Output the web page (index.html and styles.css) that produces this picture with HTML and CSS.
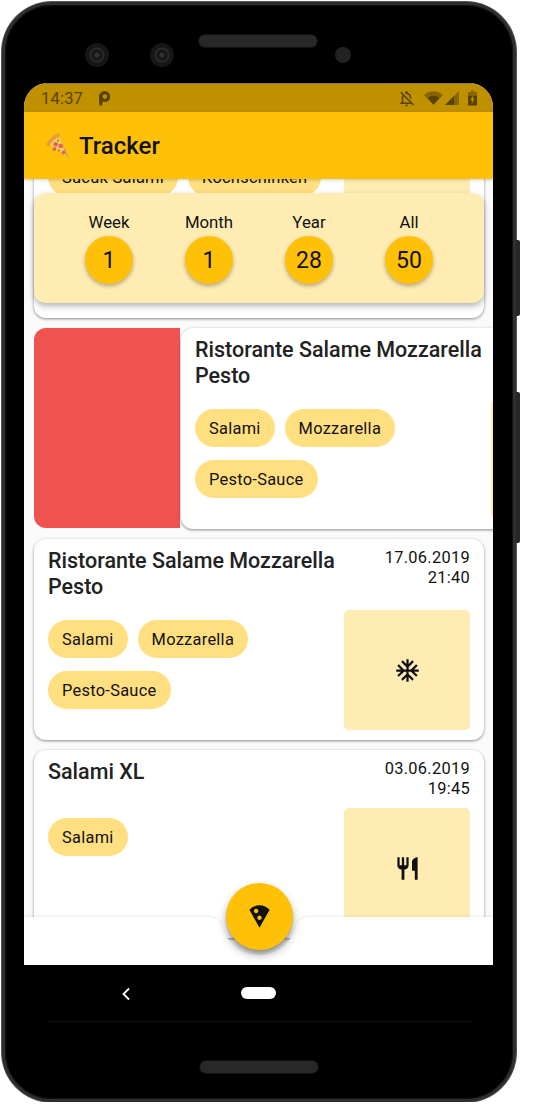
FILE: index.html
```html
<!DOCTYPE html>
<html lang="de">

<head>
    <meta charset="UTF-8">
    <meta name="viewport" content="width=device-width, initial-scale=1.0">
    <title>Tracker</title>
    <link rel="stylesheet" href="styles.css">
</head>

<body>
    <div class="device">
        <div class="phone">
            <div class="bezel-top">
                <span class="lens"></span>
                <span class="lens lens-second"></span>
                <span class="speaker"></span>
                <span class="front-cam"></span>
            </div>

            <div class="screen">
                <div class="status-bar">
                    <span class="clock">14:37</span>
                    <svg class="status-p" viewBox="0 0 12 15">
                        <circle cx="6.8" cy="5.6" r="3.900" fill="none" stroke="currentColor" stroke-width="3.200"/>
                        <rect x="1.200" y="3" width="3.200" height="11.500" rx="1.300" fill="currentColor"/>
                    </svg>
                    <span class="status-space"></span>
                    <svg class="status-icon" viewBox="0 0 24 24"><path fill="currentColor" d="M12 22c1.100 0 2-.9 2-2h-4c0 1.100.9 2 2 2zm0-15.500c2.490 0 4 2.020 4 4.500v.1l2 2V11c0-3.070-1.630-5.640-4.500-6.320V4c0-.83-.67-1.500-1.500-1.500s-1.500.67-1.500 1.500v.68c-.24.06-.47.15-.69.23l1.640 1.640c.18-.02.36-.05.55-.05zM5.410 3.350L4 4.760l2.810 2.810C6.290 8.570 6 9.740 6 11v5l-2 2v1h14.240l1.740 1.740 1.410-1.410L5.410 3.350zM16 17H8v-6c0-.68.12-1.320.34-1.900L16 16.760V17z"/></svg>
                    <svg class="status-wifi" viewBox="0 0 20 14">
                        <path fill="currentColor" opacity="0.55" d="M0 4.200C2.600 1.700 6.100 0 10 0s7.400 1.700 10 4.200L10 14z"/>
                        <path fill="currentColor" d="M4 6.900C5.600 5.500 7.700 4.600 10 4.600s4.400.9 6 2.300L10 14z"/>
                    </svg>
                    <svg class="status-signal" viewBox="0 0 14 14">
                        <path fill="currentColor" opacity="0.55" d="M14 0v14H8V6z"/>
                        <path fill="currentColor" d="M9 5v9H0z"/>
                    </svg>
                    <svg class="status-battery" viewBox="0 0 9 15">
                        <path fill="currentColor" opacity="0.55" d="M3 0h3v1.400h3V5H0V1.400h3z"/>
                        <path fill="currentColor" d="M0 5h9v10H0z"/>
                        <path fill="#bf9000" d="M5.200 4.600L2.400 9.800h1.900L3.600 13.400l3-5.400H4.800z"/>
                    </svg>
                </div>

                <header class="app-bar">
                    <svg class="pizza-logo" viewBox="0 0 26 28">
                        <path fill="#f9cf52" d="M3 11L14 3 24.500 26.500z"/>
                        <path fill="#d9a93a" d="M14 3L24.500 26.500 21 24z"/>
                        <path fill="#eb9c38" d="M1 12.500C3.500 7.500 8 3 14 1l1.500 3.500C10 6.500 6.500 10 4 14.500z"/>
                        <circle cx="10.700" cy="12.300" r="2.300" fill="#e5606f"/>
                        <circle cx="15.700" cy="14" r="2.200" fill="#e5606f"/>
                        <circle cx="9.500" cy="17" r="1.900" fill="#e5606f"/>
                        <circle cx="18.500" cy="20.500" r="2" fill="#e5606f"/>
                        <circle cx="13" cy="8.500" r="0.900" fill="#6d7a3a"/>
                        <circle cx="14" cy="18.500" r="0.900" fill="#6d7a3a"/>
                    </svg>
                    <h1 class="app-title">Tracker</h1>
                </header>

                <div class="list">
                    <div class="card card-cut">
                        <div class="card-body">
                            <div class="chips chips-tall">
                                <span class="chip">Sucuk Salami</span>
                                <span class="chip">Kochschinken</span>
                            </div>
                            <div class="tile tile-cut"></div>
                        </div>
                    </div>

                    <div class="stats">
                        <div class="stat">
                            <span class="stat-label">Week</span>
                            <span class="stat-value">1</span>
                        </div>
                        <div class="stat">
                            <span class="stat-label">Month</span>
                            <span class="stat-value">1</span>
                        </div>
                        <div class="stat">
                            <span class="stat-label">Year</span>
                            <span class="stat-value">28</span>
                        </div>
                        <div class="stat">
                            <span class="stat-label">All</span>
                            <span class="stat-value">50</span>
                        </div>
                    </div>

                    <div class="swipe-row">
                        <div class="swipe-delete"></div>
                        <div class="card">
                            <div class="card-head">
                                <h2 class="card-title card-title-swiped">Ristorante Salame Mozzarella Pesto</h2>
                            </div>
                            <div class="card-body">
                                <div class="chips">
                                    <span class="chip">Salami</span>
                                    <span class="chip">Mozzarella</span>
                                    <span class="chip">Pesto-Sauce</span>
                                </div>
                                <div class="tile"></div>
                            </div>
                        </div>
                    </div>

                    <div class="card">
                        <div class="card-head">
                            <h2 class="card-title">Ristorante Salame Mozzarella Pesto</h2>
                            <div class="card-date">17.06.2019<br>21:40</div>
                        </div>
                        <div class="card-body">
                            <div class="chips">
                                <span class="chip">Salami</span>
                                <span class="chip">Mozzarella</span>
                                <span class="chip">Pesto-Sauce</span>
                            </div>
                            <div class="tile">
                                <svg class="tile-icon" viewBox="0 0 24 24"><path d="M22 11h-4.170l3.240-3.240-1.410-1.420L15 11h-2V9l4.660-4.660-1.420-1.410L13 6.170V2h-2v4.170L7.760 2.930 6.340 4.340 11 9v2H9L4.340 6.340 2.930 7.760 6.170 11H2v2h4.170l-3.240 3.240 1.410 1.420L9 13h2v2l-4.660 4.660 1.420 1.410L11 17.830V22h2v-4.170l3.240 3.240 1.420-1.410L13 15v-2h2l4.660 4.660 1.410-1.420L17.830 13H22z"/></svg>
                            </div>
                        </div>
                    </div>

                    <div class="card">
                        <div class="card-head">
                            <h2 class="card-title">Salami XL</h2>
                            <div class="card-date">03.06.2019<br>19:45</div>
                        </div>
                        <div class="card-body">
                            <div class="chips">
                                <span class="chip">Salami</span>
                            </div>
                            <div class="tile">
                                <svg class="tile-icon" viewBox="0 0 24 24"><path d="M11 9H9V2H7v7H5V2H3v7c0 2.120 1.660 3.840 3.750 3.970V22h2.500v-9.030C11.340 12.840 13 11.120 13 9V2h-2v7zm5-3v8h2.500v8H21V2c-2.760 0-5 2.240-5 4z"/></svg>
                            </div>
                        </div>
                    </div>
                </div>

                <div class="bottom-bar">
                    <svg class="bar-shape" viewBox="0 0 469 48">
                        <path fill="#fff" d="M0 0H184C192 0 197 4 199 12A38 38 0 0 0 271 12C273 4 278 0 286 0H469V48H0Z"/>
                    </svg>
                    <button class="fab" aria-label="Pizza">
                        <svg class="fab-icon" viewBox="0 0 24 24"><path d="M12 2C8.430 2 5.230 3.540 3.010 6L12 22l8.990-16C18.780 3.550 15.570 2 12 2zM7 7c0-1.100.9-2 2-2s2 .9 2 2-.9 2-2 2-2-.9-2-2zm5 8c-1.100 0-2-.9-2-2s.9-2 2-2 2 .9 2 2-.9 2-2 2z"/></svg>
                    </button>
                </div>
            </div>

            <div class="nav-bar">
                <svg class="nav-back" viewBox="0 0 10 14"><path d="M8 1.500L2.500 7 8 12.500" fill="none" stroke="#fff" stroke-width="1.800"/></svg>
                <span class="nav-home"></span>
            </div>

            <div class="bezel-bottom">
                <span class="speaker"></span>
            </div>
        </div>

        <div class="side-keys">
            <span class="key key-power"></span>
            <span class="key key-volume"></span>
        </div>
    </div>
</body>

</html>
```

FILE: styles.css
```css
* {
    box-sizing: border-box;
}

body {
    margin: 0;
    background: #fff;
    font-family: Roboto, "Liberation Sans", sans-serif;
    color: #111;
}

.device {
    display: flex;
    padding: 2px 0 0 2px;
}

.phone {
    width: 514px;
    height: 1100px;
    padding: 0 19px;
    background: #000;
    border: 3px solid #2e2e2e;
    border-radius: 50px;
    box-shadow: inset 0 0 0 1px #111, 0 0 0 1px #555;
    display: flex;
    flex-direction: column;
}

.side-keys {
    width: 4px;
    padding-top: 238px;
    display: flex;
    flex-direction: column;
    gap: 76px;
}

.key {
    display: block;
    background: #262626;
    border-radius: 0 2px 2px 0;
}

.key-power {
    height: 76px;
}

.key-volume {
    height: 151px;
}

/* bezel */

.bezel-top {
    height: 78px;
    flex: none;
    padding-left: 61px;
    display: flex;
    align-items: flex-start;
}

.lens {
    width: 24px;
    height: 24px;
    margin-top: 38px;
    border-radius: 50%;
    background: radial-gradient(circle, #333 0 2px, #161616 3px 5px, #2a2a2a 6px 7px, #161616 8px);
}

.lens-second {
    margin-left: 41px;
}

.speaker {
    width: 118px;
    height: 12px;
    background: #282828;
    border-radius: 6px;
    box-shadow: 0 0 0 1px #111;
}

.bezel-top .speaker {
    margin: 30px 0 0 25px;
}

.front-cam {
    width: 16px;
    height: 16px;
    margin: 42px 0 0 18px;
    background: #222;
    border-radius: 50%;
}

.bezel-bottom {
    flex: 1;
    display: flex;
    justify-content: center;
    padding-top: 39px;
}

.nav-bar {
    height: 57px;
    flex: none;
    margin: 0 22px;
    border-bottom: 1px solid #0e0e0e;
    padding: 0 0 21px 75px;
    display: flex;
    align-items: flex-end;
}

.nav-back {
    width: 10px;
    height: 14px;
    margin-bottom: -1px;
}

.nav-home {
    width: 35px;
    height: 12px;
    margin-left: 110px;
    background: #fff;
    border-radius: 6px;
    margin-bottom: 1px;
}

/* screen */

.screen {
    position: relative;
    width: 469px;
    height: 882px;
    flex: none;
    background: #fafafa;
    border-radius: 24px 24px 0 0;
    overflow: hidden;
    display: flex;
    flex-direction: column;
}

.status-bar {
    height: 29px;
    flex: none;
    padding: 0 16px 0 17px;
    background: #bf9000;
    color: #584300;
    display: flex;
    align-items: center;
    border-top: 1px solid #8a7a45;
}

.clock {
    font-size: 16.500px;
    letter-spacing: 0.2px;
}

.status-p {
    width: 12px;
    height: 15px;
    margin-left: 15px;
}

.status-space {
    flex: 1;
}

.status-icon {
    width: 19px;
    height: 19px;
}

.status-wifi {
    width: 19px;
    height: 14px;
    margin-left: 8px;
}

.status-signal {
    width: 14px;
    height: 14px;
    margin-left: 2px;
}

.status-battery {
    width: 9px;
    height: 16px;
    margin-left: 9px;
}

.app-bar {
    height: 67px;
    flex: none;
    padding-left: 21px;
    background: #ffc107;
    display: flex;
    align-items: center;
    position: relative;
    z-index: 3;
    box-shadow: 0 1px 3px rgba(0, 0, 0, 0.2);
}

.pizza-logo {
    width: 26px;
    height: 28px;
}

.app-title {
    margin: 0 0 0 8px;
    font-size: 24px;
    font-weight: 500;
    color: #111;
}

.list {
    flex: 1;
    position: relative;
    padding: 0 8px 0 10px;
    overflow: hidden;
}

.stats {
    position: absolute;
    top: 14px;
    left: 10px;
    z-index: 2;
    width: 450px;
    height: 110px;
    padding-top: 17px;
    background: #ffecb3;
    border-radius: 12px;
    box-shadow: 0 3px 6px rgba(0, 0, 0, 0.3);
    display: flex;
    justify-content: center;
}

.stat {
    width: 100px;
    display: flex;
    flex-direction: column;
    align-items: center;
}

.stat-label {
    font-size: 16.800px;
    line-height: 24px;
    margin-bottom: 2px;
}

.stat-value {
    width: 48px;
    height: 48px;
    padding-top: 1px;
    border-radius: 50%;
    background: #ffc107;
    box-shadow: 0 2px 4px rgba(0, 0, 0, 0.3);
    font-size: 23px;
    display: flex;
    align-items: center;
    justify-content: center;
}

.card {
    width: 450px;
    flex: none;
    margin-bottom: 10px;
    padding: 9px 14px 10px 14px;
    background: #fff;
    border-radius: 12px;
    box-shadow: 0 1px 3px rgba(0, 0, 0, 0.45);
}

.card-cut {
    margin-top: -31px;
    padding-top: 0;
}

.card-head {
    display: flex;
    justify-content: space-between;
    gap: 16px;
    margin-bottom: 10px;
}

.card-title {
    margin: 0;
    font-size: 21.500px;
    font-weight: 500;
    line-height: 26px;
    color: #222;
    flex: 1;
}

.card-title-swiped {
    max-width: 320px;
}

.card-date {
    flex: none;
    font-size: 16.400px;
    line-height: 19.500px;
    text-align: right;
    letter-spacing: 0.3px;
}

.card-body {
    display: flex;
    justify-content: space-between;
    align-items: flex-start;
}

.chips {
    width: 286px;
    padding-top: 10px;
    display: flex;
    flex-wrap: wrap;
    align-content: flex-start;
    column-gap: 10px;
    row-gap: 13px;
}

.chips-tall {
    height: 160px;
}

.chip {
    height: 38px;
    padding: 0 14px;
    background: #ffdf80;
    border-radius: 19px;
    font-size: 16.400px;
    letter-spacing: 0.28px;
    display: flex;
    align-items: center;
}

.tile {
    width: 126px;
    height: 120px;
    background: #ffecb3;
    border-radius: 5px;
    display: flex;
    align-items: center;
    justify-content: center;
}

.tile-cut {
    height: 130px;
}

.tile-icon {
    width: 27px;
    height: 27px;
    fill: #111;
}

.swipe-row {
    display: flex;
}

.swipe-delete {
    flex: 0 0 146px;
    height: 200px;
    margin-right: 1px;
    background: #ef5350;
    border-radius: 12px 0 0 12px;
}

/* bottom bar */

.bottom-bar {
    position: absolute;
    left: 0;
    bottom: 0;
    z-index: 4;
    width: 469px;
    height: 48px;
}

.bar-shape {
    display: block;
    width: 469px;
    height: 48px;
    filter: drop-shadow(0 -1px 1px rgba(0, 0, 0, 0.08));
}

.fab {
    position: absolute;
    left: 201.500px;
    top: -34px;
    width: 67px;
    height: 67px;
    padding: 0;
    border: none;
    border-radius: 50%;
    background: #ffc107;
    box-shadow: 0 3px 3px rgba(0, 0, 0, 0.2), 0 5px 10px rgba(0, 0, 0, 0.3);
    display: flex;
    align-items: center;
    justify-content: center;
}

.fab-icon {
    width: 27px;
    height: 27px;
    fill: #111;
}
```
